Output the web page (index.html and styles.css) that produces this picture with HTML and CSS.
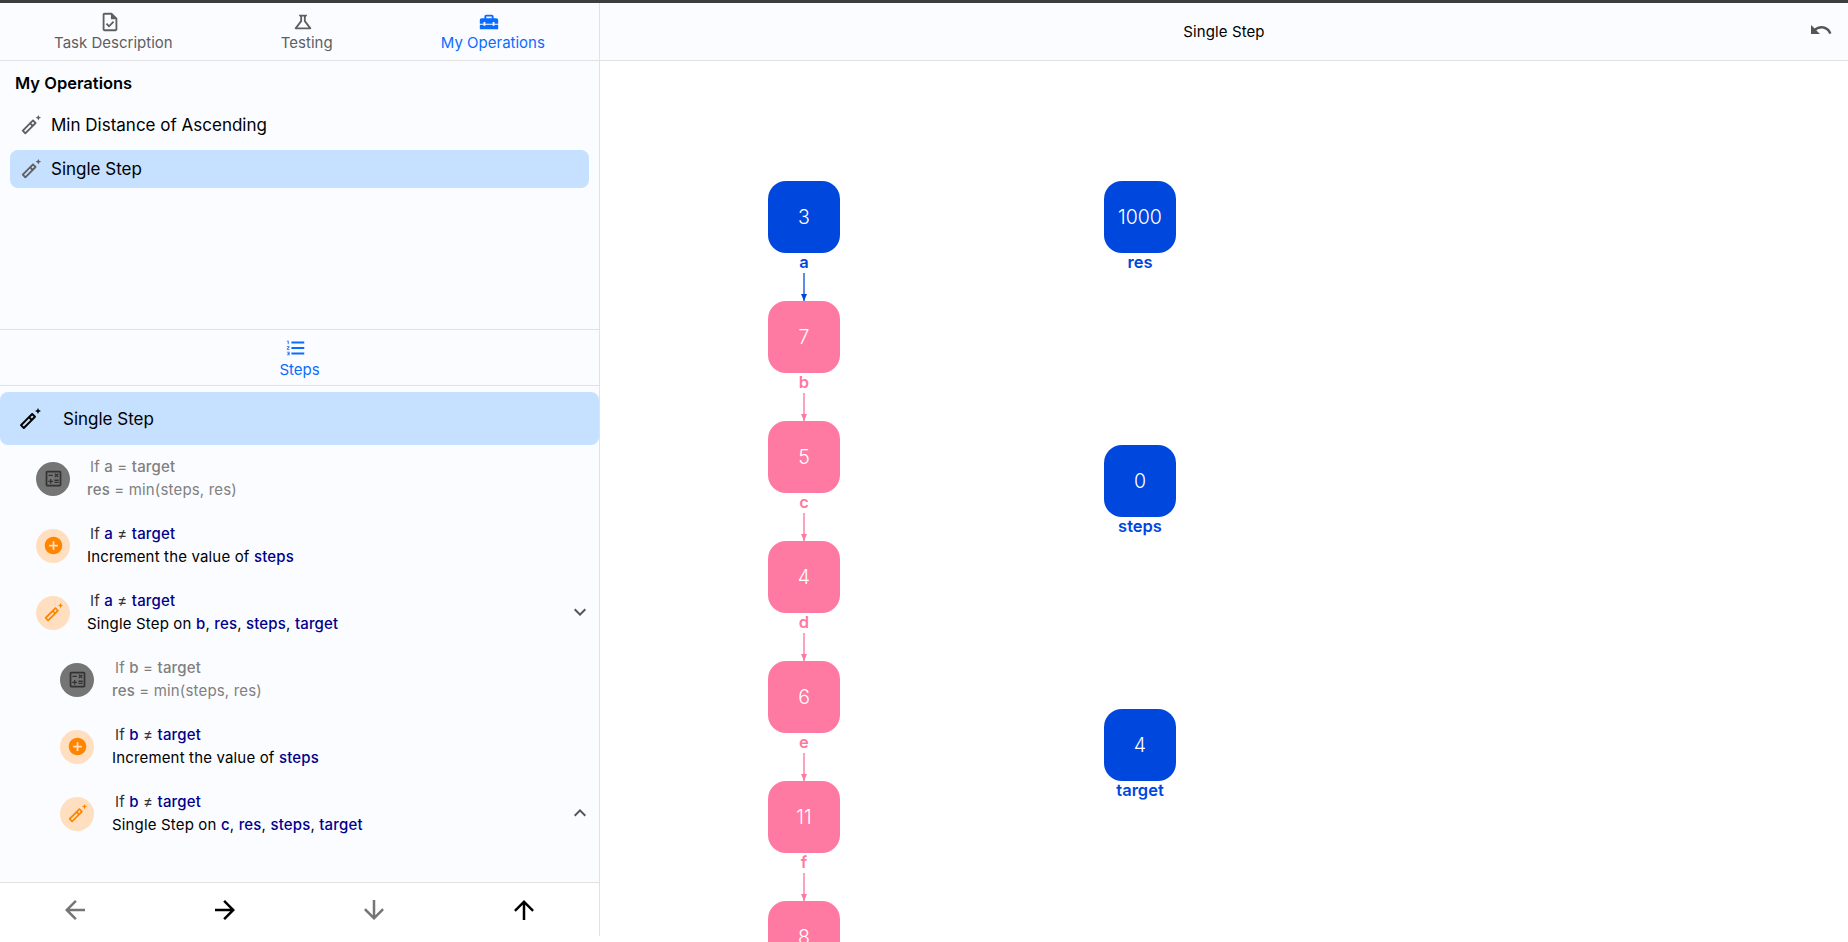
FILE: index.html
```html
<!DOCTYPE html>
<html lang="en">
<head>
<meta charset="utf-8">
<title>Single Step</title>
<link rel="stylesheet" href="styles.css">
</head>
<body>
<svg class="defs" width="0" height="0" aria-hidden="true">
  <symbol id="i-task" viewBox="0 0 24 24"><path d="M14 2H6c-1.1 0-1.99.9-1.99 2L4 20c0 1.1.89 2 1.99 2H18c1.1 0 2-.9 2-2V8l-6-6zm4 18H6V4h7v5h5v11zm-9.18-6.95L7.4 14.46 10.94 18l5.66-5.66-1.41-1.41-4.24 4.24-2.13-2.12z"/></symbol>
  <symbol id="i-science" viewBox="0 0 24 24"><path d="M13 11.33 18 18H6l5-6.67V6h2m2.96-2H8.04c-.42 0-.65.48-.39.81L9 6.5v4.17L3.2 18.4c-.49.66-.02 1.6.8 1.6h16c.82 0 1.29-.94.8-1.6L15 10.67V6.5l1.35-1.69c.26-.33.03-.81-.39-.81z"/></symbol>
  <symbol id="i-tool" viewBox="0 0 24 24"><path d="M18 16h-2v-1H8v1H6v-1H2v5h20v-5h-4zm2-8h-3V6c0-1.1-.9-2-2-2H9c-1.1 0-2 .9-2 2v2H4c-1.1 0-2 .9-2 2v4h4v-2h2v2h8v-2h2v2h4v-4c0-1.1-.9-2-2-2zm-5 0H9V6h6v2z"/></symbol>
  <symbol id="i-wand" viewBox="0 0 24 24"><path d="M20 7l.94-2.06L23 4l-2.06-.94L20 1l-.94 2.06L17 4l2.06.94z"/><path d="m17.71 9.12-2.83-2.83c-.2-.19-.45-.29-.71-.29-.25 0-.5.1-.7.29L2.29 17.46c-.39.39-.39 1.02 0 1.41l2.83 2.83c.2.2.45.29.71.29.26 0 .51-.1.71-.29l11.17-11.17c.39-.39.39-1.03 0-1.41zM5.83 19.59l-1.42-1.42L11 11.59 12.41 13l-6.58 6.59zM13.83 11.59l-1.42-1.42 1.76-1.76 1.42 1.42-1.76 1.76z"/></symbol>
  <symbol id="i-list" viewBox="0 0 24 24"><path d="M2 17h2v.5H3v1h1v.5H2v1h3v-4H2v1zm1-9h1V4H2v1h1v3zm-1 3h1.8L2 13.1v.9h3v-1H3.2L5 10.9V10H2v1zm5-6v2h14V5H7zm0 14h14v-2H7v2zm0-6h14v-2H7v2z"/></symbol>
  <symbol id="i-calc" viewBox="0 0 24 24"><path d="M19 3H5c-1.1 0-2 .9-2 2v14c0 1.1.9 2 2 2h14c1.1 0 2-.9 2-2V5c0-1.1-.9-2-2-2zm0 16H5V5h14v14z"/><path d="M6.25 7.72h5v1.5h-5zM13 15.75h5v1.5h-5zM13 13.25h5v1.5h-5zM8 18h1.5v-2h2v-1.5h-2v-2H8v2H6V16h2zM14.09 10.95l1.41-1.41 1.41 1.41 1.06-1.06-1.41-1.42 1.41-1.41L16.91 6 15.5 7.41 14.09 6l-1.06 1.06 1.41 1.41-1.41 1.42z"/></symbol>
  <symbol id="i-add" viewBox="0 0 24 24"><path d="M12 2C6.48 2 2 6.48 2 12s4.48 10 10 10 10-4.48 10-10S17.52 2 12 2zm5 11h-4v4h-2v-4H7v-2h4V7h2v4h4v2z"/></symbol>
  <symbol id="i-undo" viewBox="0 0 24 24"><path d="M12.5 8c-2.65 0-5.05.99-6.9 2.6L2 7v9h9l-3.62-3.62c1.39-1.16 3.16-1.88 5.12-1.88 3.54 0 6.55 2.31 7.6 5.5l2.37-.78C21.08 11.03 17.15 8 12.5 8z"/></symbol>
  <symbol id="i-left" viewBox="0 0 24 24"><path d="M20 11H7.83l5.59-5.59L12 4l-8 8 8 8 1.41-1.41L7.83 13H20v-2z"/></symbol>
  <symbol id="i-right" viewBox="0 0 24 24"><path d="m12 4-1.41 1.41L16.17 11H4v2h12.17l-5.58 5.59L12 20l8-8z"/></symbol>
  <symbol id="i-down" viewBox="0 0 24 24"><path d="M20 12l-1.41-1.41L13 16.17V4h-2v12.17l-5.58-5.59L4 12l8 8 8-8z"/></symbol>
  <symbol id="i-up" viewBox="0 0 24 24"><path d="M4 12l1.41 1.41L11 7.83V20h2V7.83l5.58 5.59L20 12l-8-8-8 8z"/></symbol>
  <symbol id="i-more" viewBox="0 0 24 24"><path d="M16.59 8.59 12 13.17 7.41 8.59 6 10l6 6 6-6z"/></symbol>
  <symbol id="i-less" viewBox="0 0 24 24"><path d="m12 8-6 6 1.41 1.41L12 10.83l4.59 4.58L18 14z"/></symbol>
</svg>

<div class="topline"></div>
<main class="app">
  <aside class="side">
    <nav class="tabs">
      <div class="tab"><svg class="tab-icon"><use href="#i-task"/></svg><span>Task Description</span></div>
      <div class="tab"><svg class="tab-icon"><use href="#i-science"/></svg><span>Testing</span></div>
      <div class="tab active"><svg class="tab-icon"><use href="#i-tool"/></svg><span>My Operations</span></div>
    </nav>

    <section class="ops">
      <h2 class="ops-title">My Operations</h2>
      <ul class="ops-list">
        <li class="op"><svg class="op-icon"><use href="#i-wand"/></svg>Min Distance of Ascending</li>
        <li class="op selected"><svg class="op-icon"><use href="#i-wand"/></svg>Single Step</li>
      </ul>
    </section>

    <div class="steps-tab">
      <svg class="tab-icon"><use href="#i-list"/></svg>
      <span>Steps</span>
    </div>

    <section class="steps">
      <div class="steps-head"><svg class="head-icon"><use href="#i-wand"/></svg>Single Step</div>

      <div class="step muted">
        <span class="badge grey"><svg class="badge-icon"><use href="#i-calc"/></svg></span>
        <div class="step-text"><p class="cond">If <b>a</b> = <b>target</b></p><p><b>res</b> = min(steps, res)</p></div>
      </div>
      <div class="step">
        <span class="badge orange"><svg class="badge-icon"><use href="#i-add"/></svg></span>
        <div class="step-text"><p class="cond">If <b>a</b> ≠ <b>target</b></p><p>Increment the value of <b>steps</b></p></div>
      </div>
      <div class="step">
        <span class="badge orange"><svg class="badge-icon"><use href="#i-wand"/></svg></span>
        <div class="step-text"><p class="cond">If <b>a</b> ≠ <b>target</b></p><p>Single Step on <b>b</b>, <b>res</b>, <b>steps</b>, <b>target</b></p></div>
        <svg class="chevron"><use href="#i-more"/></svg>
      </div>

      <div class="step nested muted">
        <span class="badge grey"><svg class="badge-icon"><use href="#i-calc"/></svg></span>
        <div class="step-text"><p class="cond">If <b>b</b> = <b>target</b></p><p><b>res</b> = min(steps, res)</p></div>
      </div>
      <div class="step nested">
        <span class="badge orange"><svg class="badge-icon"><use href="#i-add"/></svg></span>
        <div class="step-text"><p class="cond">If <b>b</b> ≠ <b>target</b></p><p>Increment the value of <b>steps</b></p></div>
      </div>
      <div class="step nested">
        <span class="badge orange"><svg class="badge-icon"><use href="#i-wand"/></svg></span>
        <div class="step-text"><p class="cond">If <b>b</b> ≠ <b>target</b></p><p>Single Step on <b>c</b>, <b>res</b>, <b>steps</b>, <b>target</b></p></div>
        <svg class="chevron"><use href="#i-less"/></svg>
      </div>
    </section>

    <footer class="controls">
      <svg class="ctl dim"><use href="#i-left"/></svg>
      <svg class="ctl"><use href="#i-right"/></svg>
      <svg class="ctl dim"><use href="#i-down"/></svg>
      <svg class="ctl"><use href="#i-up"/></svg>
    </footer>
  </aside>

  <section class="stage">
    <header class="stage-bar">
      <span>Single Step</span>
      <svg class="undo"><use href="#i-undo"/></svg>
    </header>
    <div class="canvas">
      <div class="node blue n-a"><div class="box">3</div><div class="label">a</div><div class="edge"></div></div>
      <div class="node pink n-b"><div class="box">7</div><div class="label">b</div><div class="edge"></div></div>
      <div class="node pink n-c"><div class="box">5</div><div class="label">c</div><div class="edge"></div></div>
      <div class="node pink n-d"><div class="box">4</div><div class="label">d</div><div class="edge"></div></div>
      <div class="node pink n-e"><div class="box">6</div><div class="label">e</div><div class="edge"></div></div>
      <div class="node pink n-f"><div class="box">11</div><div class="label">f</div><div class="edge"></div></div>
      <div class="node pink n-g"><div class="box">8</div></div>
      <div class="node blue n-res"><div class="box">1000</div><div class="label">res</div></div>
      <div class="node blue n-steps"><div class="box">0</div><div class="label">steps</div></div>
      <div class="node blue n-target"><div class="box">4</div><div class="label">target</div></div>
    </div>
  </section>
</main>
</body>
</html>
```
FILE: styles.css
```css
* { box-sizing: border-box; }
html, body { margin: 0; height: 100%; overflow: hidden; background: #fff; }
body { font-family: Inter, "Liberation Sans", sans-serif; color: #000; }
p, h2, ul { margin: 0; padding: 0; }
.defs { position: absolute; }
svg { fill: currentColor; display: block; }

.topline { height: 3px; background: #3d3d3d; }
.app { display: flex; height: 939px; }

.side {
  width: 600px; height: 933px; flex: none; display: flex; flex-direction: column;
  background: #fbfcff; border-right: 1px solid #e2e2e2;
}
.tabs { display: flex; justify-content: space-around; height: 58px; border-bottom: 1px solid #e2e2e2; flex: none; }
.tab { display: flex; flex-direction: column; align-items: center; padding-top: 8px; font-size: 15px; line-height: 20px; color: #5f5f5f; }
.tab.active { color: #0a6cff; }
.tab-icon { width: 22px; height: 22px; margin-right: 7px; }

.ops { height: 268px; flex: none; padding: 0 10px; }
.ops-title { font-size: 16.5px; font-weight: 600; line-height: 20px; padding: 12px 5px 0; height: 38px; }
.ops-list { list-style: none; margin-top: 7px; display: flex; flex-direction: column; gap: 6px; }
.op { height: 38px; display: flex; align-items: center; padding-left: 10px; border-radius: 8px; font-size: 17px; }
.op.selected { background: #c6e0ff; }
.op-icon { width: 22px; height: 22px; margin-right: 9px; color: #5f5f5f; }

.steps-tab {
  height: 57px; flex: none; display: flex; flex-direction: column; align-items: center; padding-top: 7px;
  border-top: 1px solid #e2e2e2; border-bottom: 1px solid #e2e2e2; color: #0a6cff; font-size: 15px; line-height: 22px;
}

.steps { flex: 1; padding-top: 6px; min-height: 0; }
.steps-head { height: 53px; display: flex; align-items: center; background: #c6e0ff; border-radius: 8px; padding-left: 18px; font-size: 17px; }
.head-icon { width: 24px; height: 24px; margin-right: 21px; }

.step { position: relative; height: 67px; display: flex; align-items: center; padding-left: 36px; padding-right: 7px; font-size: 15px; letter-spacing: .16px; line-height: 22.4px; }
.step.nested { padding-left: 60px; }
.badge { width: 34px; height: 34px; flex: none; border-radius: 50%; display: flex; align-items: center; justify-content: center; margin-right: 17px; }
.step.nested .badge { margin-right: 18px; }
.badge.grey { background: #757575; color: #333; }
.badge.orange { background: #ffdfc0; color: #ff8400; }
.badge-icon { width: 21px; height: 21px; }
.step-text { flex: 1; }
.step-text b { font-weight: 500; color: #00008b; }
.cond { padding-left: 3px; color: #333; }
.muted .step-text, .muted .cond, .muted .step-text b { color: #808080; }
.chevron { width: 24px; height: 24px; color: #555; margin-top: -2px; }

.controls { height: 54px; flex: none; display: grid; grid-template-columns: repeat(4, 1fr); align-items: center; justify-items: center; border-top: 1px solid #e2e2e2; background: #fff; }
.ctl { width: 30px; height: 30px; }
.ctl.dim { color: #757575; }

.stage { flex: 1; display: flex; flex-direction: column; min-width: 0; height: 939px; }
.stage-bar { height: 58px; flex: none; position: relative; display: flex; align-items: center; justify-content: center; background: #fbfcff; border-bottom: 1px solid #e2e2e2; font-size: 15px; letter-spacing: .1px; }
.undo { position: absolute; right: 15px; top: 15px; width: 24px; height: 24px; color: #555; }
.canvas { position: relative; flex: 1; overflow: hidden; background: #fff; }

.node { position: absolute; width: 72px; display: flex; flex-direction: column; align-items: center; }
.box { width: 72px; height: 72px; border-radius: 18px; display: flex; align-items: center; justify-content: center; color: #fff; font-size: 19.5px; font-weight: 350; }
.label { font-size: 16.5px; font-weight: 600; line-height: 18px; height: 20px; }
.blue .box { background: #0047de; }
.blue .label { color: #0047de; }
.pink .box { background: #ff7aa2; }
.pink .label { color: #ff7aa2; }
.edge { width: 2px; height: 28px; position: relative; }
.blue .edge { background: #5b8bed; }
.pink .edge { background: #ffa0bd; }
.edge::after { content: ""; position: absolute; left: -2px; bottom: 0; border-left: 3px solid transparent; border-right: 3px solid transparent; border-top: 7px solid; }
.blue .edge::after { color: #0047de; }
.pink .edge::after { color: #ff7aa2; }

.n-a { left: 168px; top: 120px; }
.n-b { left: 168px; top: 240px; }
.n-c { left: 168px; top: 360px; }
.n-d { left: 168px; top: 480px; }
.n-e { left: 168px; top: 600px; }
.n-f { left: 168px; top: 720px; }
.n-g { left: 168px; top: 840px; }
.n-res { left: 504px; top: 120px; }
.n-steps { left: 504px; top: 384px; }
.n-target { left: 504px; top: 648px; }
```
